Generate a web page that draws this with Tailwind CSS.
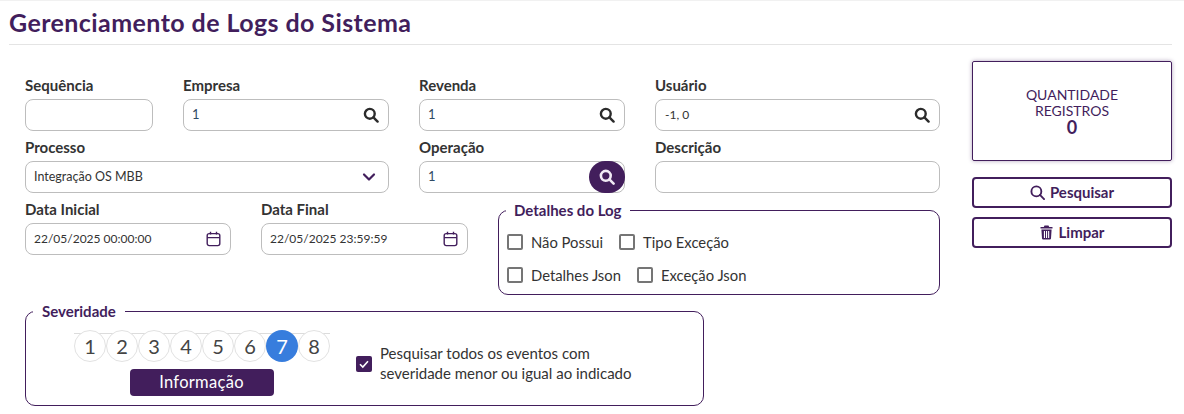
<!DOCTYPE html>
<html lang="pt-BR">
<head>
<meta charset="utf-8">
<script src="https://cdn.jsdelivr.net/npm/@tailwindcss/browser@4"></script>
</head>
<body class="bg-white font-['Lato','Open_Sans',sans-serif] text-[#333] overflow-hidden">
<div class="w-[1184px] h-[414px] px-[9px] border-t border-[#f1f1f1]">
  <div class="mr-[3px] h-[44px] border-b border-[#e4e4e4] pt-[4px]">
    <h1 class="text-[25px] tracking-[0.42px] leading-[34px] font-bold text-[#421e5c]">Gerenciamento de Logs do Sistema</h1>
  </div>
  <div class="flex mt-[16px]">
    <div class="w-[931px] pl-[16px]">
      <div class="flex gap-[30px] h-[62px] pt-[16px]">
        <div class="w-[128px]"><div class="h-[22px] text-[15px] leading-[16px] font-bold">Sequência</div><div class="h-[32px] rounded-[8px] border border-[#bdbdbd]"></div></div>
        <div class="w-[206px]"><div class="h-[22px] text-[15px] leading-[16px] font-bold">Empresa</div><div class="h-[32px] rounded-[8px] border border-[#bdbdbd] flex items-center justify-between pl-[8px] pr-[9px] text-[13px]"><span class="text-[#2f4a63]">1</span><svg class="w-[16px] h-[16px]" viewBox="0 0 16 16" fill="none" stroke="#2b2b2b" stroke-width="2.4"><circle cx="6.8" cy="6.8" r="4.9"/><path d="M10.4 10.4 14.6 14.6" stroke-linecap="round"/></svg></div></div>
        <div class="w-[206px]"><div class="h-[22px] text-[15px] leading-[16px] font-bold">Revenda</div><div class="h-[32px] rounded-[8px] border border-[#bdbdbd] flex items-center justify-between pl-[8px] pr-[9px] text-[13px]"><span class="text-[#2f4a63]">1</span><svg class="w-[16px] h-[16px]" viewBox="0 0 16 16" fill="none" stroke="#2b2b2b" stroke-width="2.4"><circle cx="6.8" cy="6.8" r="4.9"/><path d="M10.4 10.4 14.6 14.6" stroke-linecap="round"/></svg></div></div>
        <div class="w-[285px]"><div class="h-[22px] text-[15px] leading-[16px] font-bold">Usuário</div><div class="h-[32px] rounded-[8px] border border-[#bdbdbd] flex items-center justify-between pl-[9px] pr-[9px] text-[12px]"><span>-1, 0</span><svg class="w-[16px] h-[16px]" viewBox="0 0 16 16" fill="none" stroke="#2b2b2b" stroke-width="2.4"><circle cx="6.8" cy="6.8" r="4.9"/><path d="M10.4 10.4 14.6 14.6" stroke-linecap="round"/></svg></div></div>
      </div>
      <div class="flex gap-[30px] h-[62px] pt-[16px]">
        <div class="w-[364px]"><div class="h-[22px] text-[15px] leading-[16px] font-bold">Processo</div><div class="h-[32px] rounded-[8px] border border-[#bdbdbd] flex items-center justify-between pl-[8px] pr-[11px] text-[12.5px]"><span>Integração OS MBB</span><svg class="w-[16px] h-[16px]" viewBox="0 0 16 16" fill="none" stroke="#421e5c" stroke-width="2.2" stroke-linecap="round" stroke-linejoin="round"><path d="M3 5.5 8 10.5 13 5.5"/></svg></div></div>
        <div class="w-[206px]"><div class="h-[22px] text-[15px] leading-[16px] font-bold">Operação</div><div class="relative h-[32px] rounded-[8px] border border-[#bdbdbd] flex items-center pl-[8px] text-[13px]"><span class="text-[#2f4a63]">1</span><div class="absolute right-[-1px] top-[-1px] w-[36px] h-[32px] rounded-full bg-[#421e5c] flex items-center justify-center"><svg class="w-[16px] h-[16px]" viewBox="0 0 16 16" fill="none" stroke="#f1eaf5" stroke-width="2.6"><circle cx="6.8" cy="6.8" r="4.9"/><path d="M10.4 10.4 14.6 14.6" stroke-linecap="round"/></svg></div></div></div>
        <div class="w-[285px]"><div class="h-[22px] text-[15px] leading-[16px] font-bold">Descrição</div><div class="h-[32px] rounded-[8px] border border-[#bdbdbd]"></div></div>
      </div>
      <div class="flex gap-[30px] h-[117px] pt-[16px]">
        <div class="w-[206px]"><div class="h-[22px] text-[15px] leading-[16px] font-bold">Data Inicial</div><div class="h-[32px] rounded-[8px] border border-[#bdbdbd] flex items-center justify-between pl-[8px] pr-[9px] text-[12px]"><span>22/05/2025 00:00:00</span><svg class="w-[15px] h-[16px]" viewBox="0 0 15 16" fill="none" stroke="#421e5c" stroke-width="1.4"><rect x="1.2" y="2.6" width="12.6" height="12" rx="2"/><path d="M1.2 6.6H13.8M4.5 0.8V3.6M10.5 0.8V3.6"/></svg></div></div>
        <div class="w-[207px]"><div class="h-[22px] text-[15px] leading-[16px] font-bold">Data Final</div><div class="h-[32px] rounded-[8px] border border-[#bdbdbd] flex items-center justify-between pl-[8px] pr-[9px] text-[12px]"><span>22/05/2025 23:59:59</span><svg class="w-[15px] h-[16px]" viewBox="0 0 15 16" fill="none" stroke="#421e5c" stroke-width="1.4"><rect x="1.2" y="2.6" width="12.6" height="12" rx="2"/><path d="M1.2 6.6H13.8M4.5 0.8V3.6M10.5 0.8V3.6"/></svg></div></div>
        <fieldset class="w-[442px] h-[94px] rounded-[10px] border border-[#421e5c] pl-[8px]">
          <legend class="-ml-px px-[8px] text-[15px] leading-[18px] font-bold text-[#421e5c]">Detalhes do Log</legend>
          <div class="flex items-center h-[24px] mt-[11px] text-[14.8px] leading-[18px]">
            <span class="w-[16px] h-[16px] rounded-[2px] border-2 border-[#757575]"></span><span class="ml-[8px]">Não Possui</span>
            <span class="ml-[16px] w-[16px] h-[16px] rounded-[2px] border-2 border-[#757575]"></span><span class="ml-[8px]">Tipo Exceção</span>
          </div>
          <div class="flex items-center h-[24px] mt-[9px] text-[14.8px] leading-[18px]">
            <span class="w-[16px] h-[16px] rounded-[2px] border-2 border-[#757575]"></span><span class="ml-[8px]">Detalhes Json</span>
            <span class="ml-[16px] w-[16px] h-[16px] rounded-[2px] border-2 border-[#757575]"></span><span class="ml-[8px]">Exceção Json</span>
          </div>
        </fieldset>
      </div>
      <fieldset class="w-[679px] h-[104px] rounded-[10px] border border-[#421e5c] flex">
        <legend class="ml-[7px] px-[9px] text-[15px] leading-[18px] font-bold text-[#421e5c]">Severidade</legend>
        <div class="flex">
          <div class="w-[331px] shrink-0 flex flex-col items-center pl-[20px]">
            <div class="relative flex mt-[10px] w-[256px] h-[32px] ml-[1px] before:content-[''] before:absolute before:left-0 before:right-0 before:top-[3px] before:h-px before:bg-[#dcdcdc]">
              <span class="relative z-10 w-[32px] h-[32px] rounded-full bg-white border border-[#e2e2e2] flex items-center justify-center text-[20px] text-[#444]">1</span>
              <span class="relative z-10 w-[32px] h-[32px] rounded-full bg-white border border-[#e2e2e2] flex items-center justify-center text-[20px] text-[#444]">2</span>
              <span class="relative z-10 w-[32px] h-[32px] rounded-full bg-white border border-[#e2e2e2] flex items-center justify-center text-[20px] text-[#444]">3</span>
              <span class="relative z-10 w-[32px] h-[32px] rounded-full bg-white border border-[#e2e2e2] flex items-center justify-center text-[20px] text-[#444]">4</span>
              <span class="relative z-10 w-[32px] h-[32px] rounded-full bg-white border border-[#e2e2e2] flex items-center justify-center text-[20px] text-[#444]">5</span>
              <span class="relative z-10 w-[32px] h-[32px] rounded-full bg-white border border-[#e2e2e2] flex items-center justify-center text-[20px] text-[#444]">6</span>
              <span class="relative z-10 w-[32px] h-[32px] rounded-full bg-[#377ddd] flex items-center justify-center text-[20px] text-white">7</span>
              <span class="relative z-10 w-[32px] h-[32px] rounded-full bg-white border border-[#e2e2e2] flex items-center justify-center text-[20px] text-[#444]">8</span>
            </div>
            <div class="mt-[7px] w-[144px] h-[27px] rounded-[4px] bg-[#421e5c] text-white text-[16.5px] tracking-[0.3px] flex items-center justify-center">Informação</div>
          </div>
          <div class="flex items-center mt-[3px] ml-[-1px]">
            <span class="w-[16px] h-[16px] rounded-[2px] bg-[#421e5c] flex items-center justify-center"><svg class="w-[12px] h-[12px]" viewBox="0 0 12 12" fill="none" stroke="white" stroke-width="1.6"><path d="M2 6.2 4.8 9 10 3.2"/></svg></span>
            <span class="ml-[8px] mb-[2px] text-[15px] leading-[20px]">Pesquisar todos os eventos com<br>severidade menor ou igual ao indicado</span>
          </div>
        </div>
      </fieldset>
    </div>
    <div class="w-[200px] ml-[32px]">
      <div class="h-[100px] rounded-[2px] border border-[#421e5c] shadow-[0_0_4px_rgba(66,30,92,0.4)] flex flex-col items-center justify-center text-[#421e5c] text-[14px] leading-[16px] text-center">
        <div>QUANTIDADE</div><div>REGISTROS</div><div class="text-[18px] leading-[17px] font-bold">0</div>
      </div>
      <div class="mt-[16px] h-[31px] rounded-[4px] border-2 border-[#421e5c] flex items-center justify-center gap-[5px] text-[#421e5c] text-[15px] font-bold"><svg class="w-[15px] h-[15px]" viewBox="0 0 16 16" fill="none" stroke="#421e5c" stroke-width="2"><circle cx="6.8" cy="6.8" r="5.3"/><path d="M10.6 10.6 15 15" stroke-linecap="round"/></svg>Pesquisar</div>
      <div class="mt-[9px] h-[31px] rounded-[4px] border-2 border-[#421e5c] flex items-center justify-center gap-[6px] text-[#421e5c] text-[15px] font-bold"><svg class="w-[13px] h-[15px]" viewBox="0 0 13 15" fill="#421e5c"><path d="M4.5 0.5h4l0.7 1.5H12.5v1.6H0.5V2H3.8ZM1.4 4.5h10.2l-0.6 9a1.2 1.2 0 0 1-1.2 1.1H3.2a1.2 1.2 0 0 1-1.2-1.1ZM3.9 6v7h1.1V6ZM6 6v7h1.1V6ZM8.1 6v7h1.1V6Z" fill-rule="evenodd"/></svg>Limpar</div>
    </div>
  </div>
</div>
</body>
</html>
